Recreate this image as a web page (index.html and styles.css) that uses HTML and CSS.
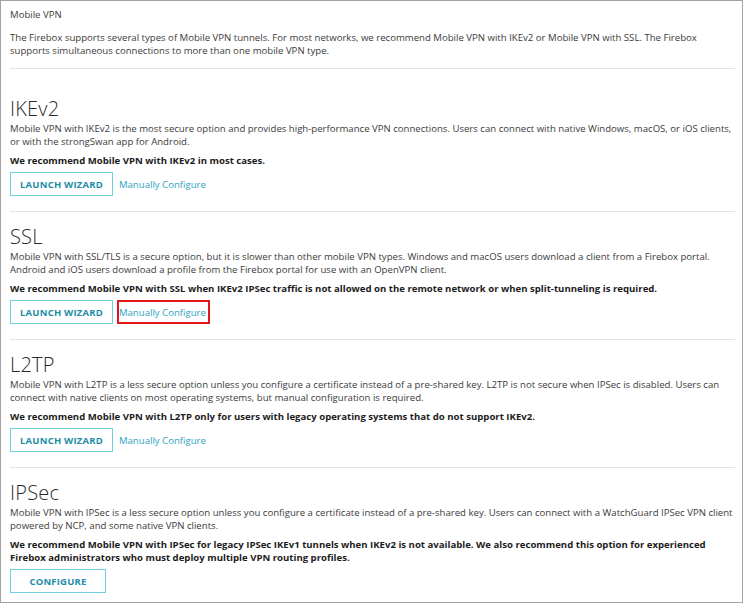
FILE: index.html
```html
<!DOCTYPE html>
<html lang="en">
<head>
<meta charset="utf-8">
<title>Mobile VPN</title>
<link rel="stylesheet" href="styles.css">
</head>
<body>
<div class="frame">
  <div class="page-title">Mobile VPN</div>
  <p class="intro">The Firebox supports several types of Mobile VPN tunnels. For most networks, we recommend Mobile VPN with IKEv2 or Mobile VPN with SSL. The Firebox supports simultaneous connections to more than one mobile VPN type.</p>

  <section class="vpn first">
    <h2 class="vpn-title">IKEv2</h2>
    <p class="vpn-desc">Mobile VPN with IKEv2 is the most secure option and provides high-performance VPN connections. Users can connect with native Windows, macOS, or iOS clients, or with the strongSwan app for Android.</p>
    <p class="vpn-rec">We recommend Mobile VPN with IKEv2 in most cases.</p>
    <div class="actions">
      <button class="btn">LAUNCH WIZARD</button>
      <a class="link" href="#">Manually Configure</a>
    </div>
  </section>

  <section class="vpn">
    <h2 class="vpn-title">SSL</h2>
    <p class="vpn-desc">Mobile VPN with SSL/TLS is a secure option, but it is slower than other mobile VPN types. Windows and macOS users download a client from a Firebox portal. Android and iOS users download a profile from the Firebox portal for use with an OpenVPN client.</p>
    <p class="vpn-rec">We recommend Mobile VPN with SSL when IKEv2 IPSec traffic is not allowed on the remote network or when split-tunneling is required.</p>
    <div class="actions">
      <button class="btn">LAUNCH WIZARD</button>
      <a class="link highlighted" href="#">Manually Configure</a>
    </div>
  </section>

  <section class="vpn">
    <h2 class="vpn-title">L2TP</h2>
    <p class="vpn-desc">Mobile VPN with L2TP is a less secure option unless you configure a certificate instead of a pre-shared key. L2TP is not secure when IPSec is disabled. Users can connect with native clients on most operating systems, but manual configuration is required.</p>
    <p class="vpn-rec">We recommend Mobile VPN with L2TP only for users with legacy operating systems that do not support IKEv2.</p>
    <div class="actions">
      <button class="btn">LAUNCH WIZARD</button>
      <a class="link" href="#">Manually Configure</a>
    </div>
  </section>

  <section class="vpn last">
    <h2 class="vpn-title">IPSec</h2>
    <p class="vpn-desc">Mobile VPN with IPSec is a less secure option unless you configure a certificate instead of a pre-shared key. Users can connect with a WatchGuard IPSec VPN client powered by NCP, and some native VPN clients.</p>
    <p class="vpn-rec">We recommend Mobile VPN with IPSec for legacy IPSec IKEv1 tunnels when IKEv2 is not available. We also recommend this option for experienced Firebox administrators who must deploy multiple VPN routing profiles.</p>
    <div class="actions">
      <button class="btn">CONFIGURE</button>
    </div>
  </section>
</div>
</body>
</html>
```
FILE: styles.css
```css
html, body {
  margin: 0;
  padding: 0;
  background: #ffffff;
}

body {
  font-family: "Open Sans", "Liberation Sans", sans-serif;
  font-size: 9.6px;
  line-height: 13px;
  color: #3b3b3b;
}

.frame {
  box-sizing: border-box;
  width: 743px;
  height: 603px;
  border: 1px solid #a3a3a3;
  padding: 7px 7px 0 9px;
  overflow: hidden;
}

.page-title {
  margin: 0;
}

.intro {
  margin: 10px 0 0;
  padding-bottom: 11px;
  border-bottom: 1px solid #e4e4e4;
}

p {
  margin: 0;
}

.vpn {
  padding: 14px 0 15px;
  border-bottom: 1px solid #e4e4e4;
}

.vpn.first {
  padding-top: 29px;
}

.vpn.last {
  border-bottom: none;
  padding-top: 14px;
}

.vpn-title {
  margin: 0 0 2px;
  font-size: 20px;
  line-height: 22px;
  font-weight: 300;
  letter-spacing: 0.2px;
  color: #2a2a2a;
}

.vpn-desc {
  margin: 0;
}

.vpn-rec {
  margin-top: 6px;
  font-weight: 700;
  color: #1c1c1c;
}

.actions {
  display: flex;
  align-items: center;
  gap: 7px;
  margin-top: 5px;
}

.btn {
  box-sizing: border-box;
  height: 24px;
  min-width: 96px;
  padding: 0 9px;
  border: 1px solid #6fd0e0;
  background: #ffffff;
  font-family: "Open Sans", "Liberation Sans", sans-serif;
  font-size: 9.5px;
  font-weight: 700;
  letter-spacing: 0.2px;
  color: #1f8ca8;
  cursor: pointer;
}

.link {
  display: inline-flex;
  align-items: center;
  box-sizing: border-box;
  height: 24px;
  padding: 0 2px 0 0;
  border: 2px solid transparent;
  margin-left: -3px;
  color: #2ea3c4;
  text-decoration: none;
}

.link.highlighted {
  border-color: #e4141d;
}
```
